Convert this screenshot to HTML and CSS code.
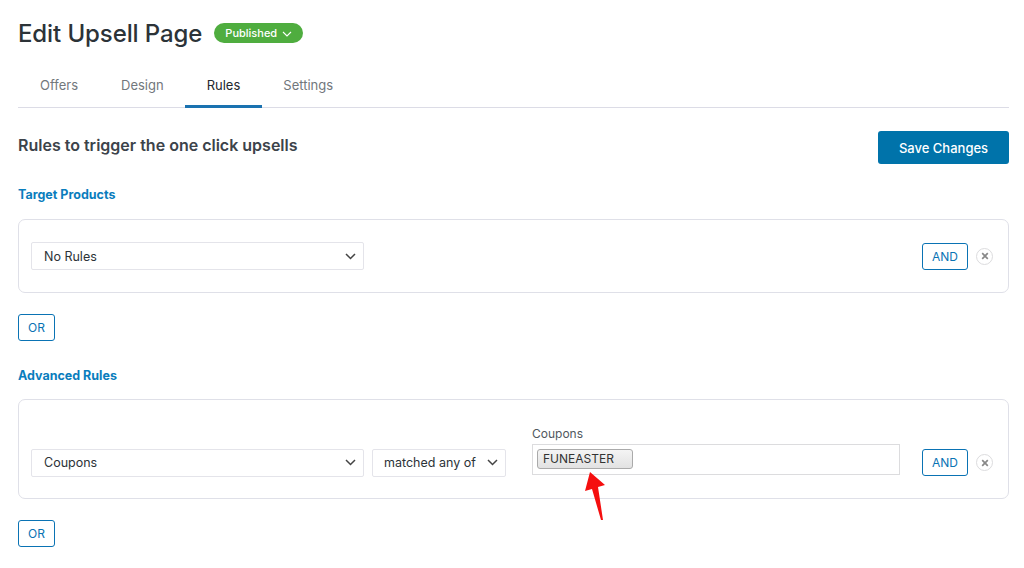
FILE: index.html
```html
<!DOCTYPE html>
<html>
<head>
<meta charset="utf-8">
<link rel="stylesheet" href="styles.css">
</head>
<body>
<div class="page">
  <header class="head">
    <h1 class="title">Edit Upsell Page</h1>
    <span class="badge">Published
      <svg class="badge-chev" width="10" height="6" viewBox="0 0 10 6"><path d="M1 1l4 4 4-4" fill="none" stroke="#fff" stroke-width="1.1"/></svg>
    </span>
  </header>
  <nav class="tabs">
    <span class="tab">Offers</span>
    <span class="tab">Design</span>
    <span class="tab active">Rules</span>
    <span class="tab">Settings</span>
  </nav>

  <div class="toolbar">
    <h2 class="subtitle">Rules to trigger the one click upsells</h2>
    <button class="btn-primary">Save Changes</button>
  </div>

  <h3 class="section">Target Products</h3>
  <div class="card card-1">
    <div class="select sel-wide"><span>No Rules</span>
      <svg width="11" height="7" viewBox="0 0 11 7"><path d="M1 1l4.5 4.5L10 1" fill="none" stroke="#444" stroke-width="1.5"/></svg>
    </div>
    <div class="spacer"></div>
    <button class="btn-outline btn-and">AND</button>
    <span class="close"><svg width="8" height="8" viewBox="0 0 8 8"><path d="M1.2 1.2l5.6 5.6M6.8 1.2L1.2 6.8" stroke="#888" stroke-width="1.7"/></svg></span>
  </div>
  <button class="btn-outline btn-or">OR</button>

  <h3 class="section section-2">Advanced Rules</h3>
  <div class="card card-2">
    <div class="select sel-wide"><span>Coupons</span>
      <svg width="11" height="7" viewBox="0 0 11 7"><path d="M1 1l4.5 4.5L10 1" fill="none" stroke="#444" stroke-width="1.5"/></svg>
    </div>
    <div class="select sel-op"><span>matched any of</span>
      <svg width="11" height="7" viewBox="0 0 11 7"><path d="M1 1l4.5 4.5L10 1" fill="none" stroke="#444" stroke-width="1.5"/></svg>
    </div>
    <div class="field">
      <label class="field-label">Coupons</label>
      <div class="tags-input">
        <span class="tag">FUNEASTER</span>
      </div>
      <svg class="arrow" width="24" height="50" viewBox="0 0 24 50"><polygon points="7,0 22,13 15,15 20,48 18,48 9,17 2,19" fill="#f50f0f"/></svg>
    </div>
    <div class="spacer"></div>
    <button class="btn-outline btn-and">AND</button>
    <span class="close"><svg width="8" height="8" viewBox="0 0 8 8"><path d="M1.2 1.2l5.6 5.6M6.8 1.2L1.2 6.8" stroke="#888" stroke-width="1.7"/></svg></span>
  </div>
  <button class="btn-outline btn-or">OR</button>
</div>
</body>
</html>
```

FILE: styles.css
```css
* { box-sizing: border-box; }
html, body { margin: 0; padding: 0; background: #fff; }
body {
  font-family: Inter, "Open Sans", "Liberation Sans", sans-serif;
  color: #3c434a;
  width: 1024px;
  height: 568px;
  overflow: hidden;
}
.page { padding: 0 15px 0 18px; }

.head { display: flex; align-items: center; height: 64px; padding-top: 2px; }
.title { margin: 0; font-size: 24px; font-weight: 500; color: #2c3338; letter-spacing: -0.1px; }
.badge {
  margin-left: 12px;
  display: inline-flex; align-items: center; gap: 5px;
  background: #4fad3f; color: #fff;
  font-size: 11px; font-weight: 500;
  height: 20px; padding: 0 11px 0 11px;
  border-radius: 10px;
}
.badge-chev { margin-top: 1px; }

.tabs { display: flex; height: 44px; border-bottom: 1px solid #dcdce6; }
.tab {
  display: flex; align-items: center; justify-content: center;
  font-size: 13px; color: #72777c;
  height: 44px; padding: 0 21.5px 3px; margin-bottom: -1px;
}
.tab:first-child { padding-left: 22px; }
.tab.active { color: #23282d; border-bottom: 3px solid #1a72b0; padding-bottom: 0; }

.toolbar { display: flex; justify-content: space-between; align-items: center; margin-top: 23px; height: 34px; }
.subtitle { margin: 0; font-size: 16px; font-weight: 600; color: #3c434a; margin-top: -6px; }
.btn-primary {
  background: #0073aa; color: #fff; border: 0; border-radius: 3px;
  font-family: inherit; font-size: 13px; font-weight: 500;
  height: 33px; width: 131px; margin-right: 0; margin-top: -1px;
}

.section { margin: 22px 0 0; font-size: 12.5px; font-weight: 700; color: #0a7dbd; line-height: 16px; }
.section-2 { margin-top: 27px; }

.card {
  display: flex; align-items: center;
  border: 1px solid #dfe0e8; border-radius: 7px;
  padding: 0 15px 0 12px;
}
.card-1 { margin-top: 16px; height: 74px; }
.card-2 { margin-top: 15px; height: 100px; padding-top: 27px; }

.select {
  display: flex; align-items: center; justify-content: space-between;
  height: 28px; border: 1px solid #e4e4ea; border-radius: 2px;
  font-size: 12.5px; color: #2c3338;
  padding: 0 7px 0 12px;
}
.sel-wide { width: 333px; }
.sel-op { width: 134px; margin-left: 8px; padding-left: 11px; }

.field { position: relative; margin-left: 26px; width: 368px; margin-top: -24px; }
.field-label { display: block; font-size: 12px; color: #50575e; line-height: 14px; margin-bottom: 3px; }
.tags-input {
  height: 31px; border: 1px solid #dcdcde; padding: 2px 4px;
}
.tag {
  display: inline-block;
  font-size: 12px; color: #333; line-height: 18px;
  padding: 0 18px 0 5px; width: 96px;
  border: 1px solid #aaa; border-radius: 3px;
  background: linear-gradient(#f4f4f4, #e2e2e2);
}
.arrow { position: absolute; left: 51px; top: 45px; }

.spacer { flex: 1; }
.btn-outline {
  background: #fff; border: 1px solid #0a73b4; border-radius: 3px;
  color: #0a73b4; font-family: inherit; font-size: 12px;
  height: 27px; padding: 0;
}
.btn-and { width: 46px; }
.btn-or { width: 37px; margin-top: 21px; display: block; }
.close {
  display: inline-flex; align-items: center; justify-content: center;
  width: 17px; height: 17px; border: 1px solid #dcdcde; border-radius: 50%;
  margin-left: 8px;
}
```
